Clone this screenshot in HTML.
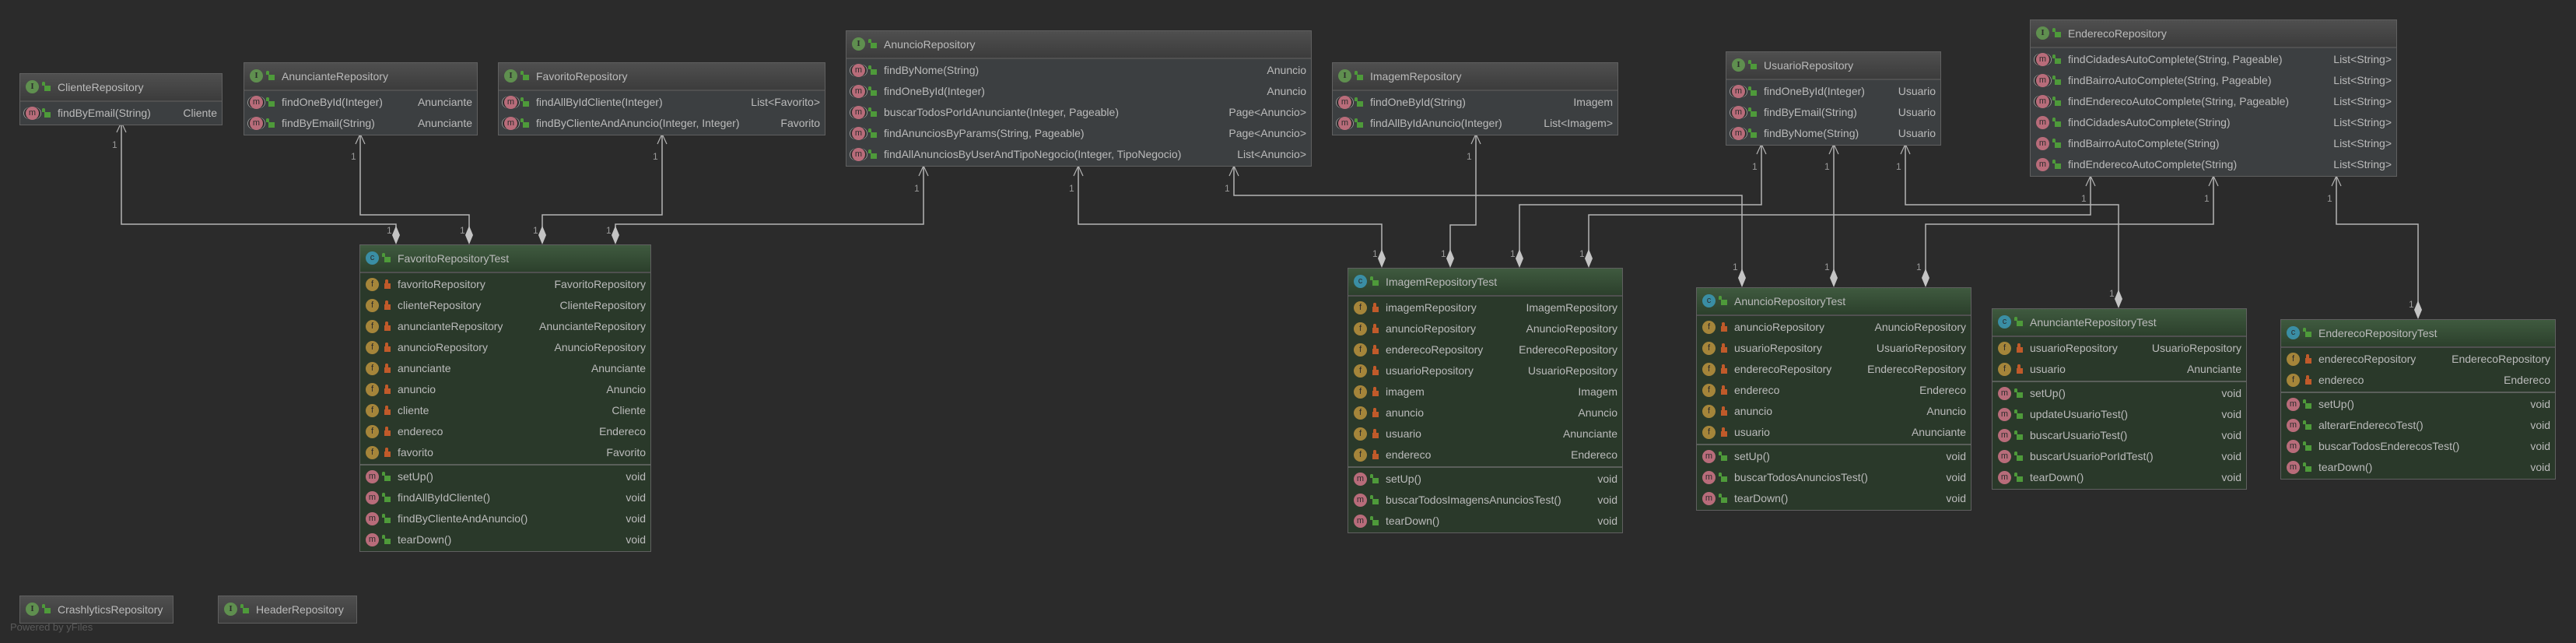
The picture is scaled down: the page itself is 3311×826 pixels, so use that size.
<!DOCTYPE html>
<html><head><meta charset="utf-8"><style>
*{box-sizing:border-box;margin:0;padding:0}
body{width:3311px;height:826px;background:#2b2b2b;position:relative;overflow:hidden;font-family:"Liberation Sans",sans-serif}
svg.l{position:absolute;left:0;top:0}
.b{position:absolute;border:1px solid #606060;font-size:14px;color:#bbbbbb}
.h{position:relative;height:34px;line-height:34px;padding-left:48px;white-space:nowrap}
.i .h{background:linear-gradient(#4f4f4f,#3c3c3c)}
.t .h{background:linear-gradient(#3f5a3f,#2c402c)}
.s{padding:1px 0;border-top:2px solid #505050}
.i .s{background:#3c3f41}
.t .s{background:#2a392a}
.t .s+.s{border-top:2px solid #5a5f5a}
.r{position:relative;height:27px;line-height:27px;padding-left:48px;padding-right:6px;display:flex;justify-content:space-between;white-space:nowrap}
.r span:last-child{padding-left:12px}
.ic{position:absolute;left:7px;top:5px;width:17px;height:17px;border-radius:50%;font-size:11px;line-height:17px;text-align:center;color:#2b2b2b;padding:0!important}
.h .ic{top:8px}
.I{background:#5f8f4f;font-family:"Liberation Serif",serif;font-weight:bold}
.m{background:#b86c7a}
.a{background:#b86c7a;box-shadow:-3px 0 0 -1px #2b2b2b,-4px 0 0 -1px #999,3px 0 0 -1px #2b2b2b,4px 0 0 -1px #999}
.f{background:#a5853a}
.C{background:#3a8ea4}
.lk{position:absolute;left:31px;top:12px;width:8px;height:7px;padding:0!important}
.h .lk{top:15px}
.lk::before{content:"";position:absolute;left:1px;top:-5px;width:4px;height:5px;border:2px solid;border-bottom:none;border-radius:3px 3px 0 0;box-sizing:border-box}
.g{background:#4e9a3a}.g::before{border-color:#4e9a3a;left:-3px}
.o{background:#c05a2a}.o::before{border-color:#c05a2a}
</style></head><body>
<svg class="l" width="3311" height="826" fill="none" stroke="#b4b4b4" stroke-width="1.5">
<path d="M156 156V288H509V292M463 171V276H603V292M851 171V276H697V292M1187 212V288H791V292M1386 212V288H1776V322M1897 171V289H1864V322M2264 184V263H1953V322M2687 225V276H2042V322M1586 212V251H2239V347M2357 184V347M2845 225V288H2475V347M2449 184V263H2723V374M3003 225V288H3108V388"/>
<g stroke-width="1.2"><path d="M150 170L156 157L162 170M457 185L463 172L469 185M845 185L851 172L857 185M1181 226L1187 213L1193 226M1380 226L1386 213L1392 226M1580 226L1586 213L1592 226M1891 185L1897 172L1903 185M2258 198L2264 185L2270 198M2351 198L2357 185L2363 198M2443 198L2449 185L2455 198M2681 239L2687 226L2693 239M2839 239L2845 226L2851 239M2997 239L3003 226L3009 239"/></g>
<g fill="#c4c4c4" stroke="none">
<polygon points="509,314 514,302 509,290 504,302"/><polygon points="603,314 608,302 603,290 598,302"/><polygon points="697,314 702,302 697,290 692,302"/><polygon points="791,314 796,302 791,290 786,302"/>
<polygon points="1776,344 1781,332 1776,320 1771,332"/><polygon points="1864,344 1869,332 1864,320 1859,332"/><polygon points="1953,344 1958,332 1953,320 1948,332"/><polygon points="2042,344 2047,332 2042,320 2037,332"/>
<polygon points="2239,369 2244,357 2239,345 2234,357"/><polygon points="2357,369 2362,357 2357,345 2352,357"/><polygon points="2475,369 2480,357 2475,345 2470,357"/>
<polygon points="2723,396 2728,384 2723,372 2718,384"/><polygon points="3108,410 3113,398 3108,386 3103,398"/>
</g>
<g fill="#9a9a9a" stroke="none" font-size="12" font-family="Liberation Sans">
<text x="144" y="190">1</text><text x="451" y="205">1</text><text x="839" y="205">1</text><text x="1175" y="246">1</text><text x="1374" y="246">1</text><text x="1574" y="246">1</text><text x="1885" y="205">1</text><text x="2252" y="218">1</text><text x="2345" y="218">1</text><text x="2437" y="218">1</text><text x="2675" y="259">1</text><text x="2833" y="259">1</text><text x="2991" y="259">1</text>
<text x="497" y="300">1</text><text x="591" y="300">1</text><text x="685" y="300">1</text><text x="779" y="300">1</text>
<text x="1764" y="330">1</text><text x="1852" y="330">1</text><text x="1941" y="330">1</text><text x="2030" y="330">1</text>
<text x="2227" y="347">1</text><text x="2345" y="347">1</text><text x="2463" y="347">1</text><text x="2711" y="381">1</text><text x="3096" y="395">1</text>
</g>
</svg>

<div class="b i" style="left:25px;top:94px;width:261px"><div class="h"><span class="ic I">I</span><span class="lk g"></span>ClienteRepository</div>
<div class="s"><div class="r"><span class="ic a">m</span><span class="lk g"></span><span>findByEmail(String)</span><span>Cliente</span></div></div></div>

<div class="b i" style="left:313px;top:80px;width:301px"><div class="h"><span class="ic I">I</span><span class="lk g"></span>AnuncianteRepository</div>
<div class="s"><div class="r"><span class="ic a">m</span><span class="lk g"></span><span>findOneById(Integer)</span><span>Anunciante</span></div>
<div class="r"><span class="ic a">m</span><span class="lk g"></span><span>findByEmail(String)</span><span>Anunciante</span></div></div></div>

<div class="b i" style="left:640px;top:80px;width:421px"><div class="h"><span class="ic I">I</span><span class="lk g"></span>FavoritoRepository</div>
<div class="s"><div class="r"><span class="ic a">m</span><span class="lk g"></span><span>findAllByIdCliente(Integer)</span><span>List&lt;Favorito&gt;</span></div>
<div class="r"><span class="ic a">m</span><span class="lk g"></span><span>findByClienteAndAnuncio(Integer, Integer)</span><span>Favorito</span></div></div></div>

<div class="b i" style="left:1087px;top:39px;width:599px"><div class="h"><span class="ic I">I</span><span class="lk g"></span>AnuncioRepository</div>
<div class="s"><div class="r"><span class="ic a">m</span><span class="lk g"></span><span>findByNome(String)</span><span>Anuncio</span></div>
<div class="r"><span class="ic a">m</span><span class="lk g"></span><span>findOneById(Integer)</span><span>Anuncio</span></div>
<div class="r"><span class="ic a">m</span><span class="lk g"></span><span>buscarTodosPorIdAnunciante(Integer, Pageable)</span><span>Page&lt;Anuncio&gt;</span></div>
<div class="r"><span class="ic a">m</span><span class="lk g"></span><span>findAnunciosByParams(String, Pageable)</span><span>Page&lt;Anuncio&gt;</span></div>
<div class="r"><span class="ic a">m</span><span class="lk g"></span><span>findAllAnunciosByUserAndTipoNegocio(Integer, TipoNegocio)</span><span>List&lt;Anuncio&gt;</span></div></div></div>

<div class="b i" style="left:1712px;top:80px;width:368px"><div class="h"><span class="ic I">I</span><span class="lk g"></span>ImagemRepository</div>
<div class="s"><div class="r"><span class="ic a">m</span><span class="lk g"></span><span>findOneById(String)</span><span>Imagem</span></div>
<div class="r"><span class="ic a">m</span><span class="lk g"></span><span>findAllByIdAnuncio(Integer)</span><span>List&lt;Imagem&gt;</span></div></div></div>

<div class="b i" style="left:2218px;top:66px;width:277px"><div class="h"><span class="ic I">I</span><span class="lk g"></span>UsuarioRepository</div>
<div class="s"><div class="r"><span class="ic a">m</span><span class="lk g"></span><span>findOneById(Integer)</span><span>Usuario</span></div>
<div class="r"><span class="ic a">m</span><span class="lk g"></span><span>findByEmail(String)</span><span>Usuario</span></div>
<div class="r"><span class="ic a">m</span><span class="lk g"></span><span>findByNome(String)</span><span>Usuario</span></div></div></div>

<div class="b i" style="left:2609px;top:25px;width:472px"><div class="h"><span class="ic I">I</span><span class="lk g"></span>EnderecoRepository</div>
<div class="s"><div class="r"><span class="ic a">m</span><span class="lk g"></span><span>findCidadesAutoComplete(String, Pageable)</span><span>List&lt;String&gt;</span></div>
<div class="r"><span class="ic a">m</span><span class="lk g"></span><span>findBairroAutoComplete(String, Pageable)</span><span>List&lt;String&gt;</span></div>
<div class="r"><span class="ic a">m</span><span class="lk g"></span><span>findEnderecoAutoComplete(String, Pageable)</span><span>List&lt;String&gt;</span></div>
<div class="r"><span class="ic m">m</span><span class="lk g"></span><span>findCidadesAutoComplete(String)</span><span>List&lt;String&gt;</span></div>
<div class="r"><span class="ic m">m</span><span class="lk g"></span><span>findBairroAutoComplete(String)</span><span>List&lt;String&gt;</span></div>
<div class="r"><span class="ic m">m</span><span class="lk g"></span><span>findEnderecoAutoComplete(String)</span><span>List&lt;String&gt;</span></div></div></div>

<div class="b t" style="left:462px;top:314px;width:375px"><div class="h"><span class="ic C">c</span><span class="lk g"></span>FavoritoRepositoryTest</div>
<div class="s"><div class="r"><span class="ic f">f</span><span class="lk o"></span><span>favoritoRepository</span><span>FavoritoRepository</span></div>
<div class="r"><span class="ic f">f</span><span class="lk o"></span><span>clienteRepository</span><span>ClienteRepository</span></div>
<div class="r"><span class="ic f">f</span><span class="lk o"></span><span>anuncianteRepository</span><span>AnuncianteRepository</span></div>
<div class="r"><span class="ic f">f</span><span class="lk o"></span><span>anuncioRepository</span><span>AnuncioRepository</span></div>
<div class="r"><span class="ic f">f</span><span class="lk o"></span><span>anunciante</span><span>Anunciante</span></div>
<div class="r"><span class="ic f">f</span><span class="lk o"></span><span>anuncio</span><span>Anuncio</span></div>
<div class="r"><span class="ic f">f</span><span class="lk o"></span><span>cliente</span><span>Cliente</span></div>
<div class="r"><span class="ic f">f</span><span class="lk o"></span><span>endereco</span><span>Endereco</span></div>
<div class="r"><span class="ic f">f</span><span class="lk o"></span><span>favorito</span><span>Favorito</span></div></div>
<div class="s"><div class="r"><span class="ic m">m</span><span class="lk g"></span><span>setUp()</span><span>void</span></div>
<div class="r"><span class="ic m">m</span><span class="lk g"></span><span>findAllByIdCliente()</span><span>void</span></div>
<div class="r"><span class="ic m">m</span><span class="lk g"></span><span>findByClienteAndAnuncio()</span><span>void</span></div>
<div class="r"><span class="ic m">m</span><span class="lk g"></span><span>tearDown()</span><span>void</span></div></div></div>

<div class="b t" style="left:1732px;top:344px;width:354px"><div class="h"><span class="ic C">c</span><span class="lk g"></span>ImagemRepositoryTest</div>
<div class="s"><div class="r"><span class="ic f">f</span><span class="lk o"></span><span>imagemRepository</span><span>ImagemRepository</span></div>
<div class="r"><span class="ic f">f</span><span class="lk o"></span><span>anuncioRepository</span><span>AnuncioRepository</span></div>
<div class="r"><span class="ic f">f</span><span class="lk o"></span><span>enderecoRepository</span><span>EnderecoRepository</span></div>
<div class="r"><span class="ic f">f</span><span class="lk o"></span><span>usuarioRepository</span><span>UsuarioRepository</span></div>
<div class="r"><span class="ic f">f</span><span class="lk o"></span><span>imagem</span><span>Imagem</span></div>
<div class="r"><span class="ic f">f</span><span class="lk o"></span><span>anuncio</span><span>Anuncio</span></div>
<div class="r"><span class="ic f">f</span><span class="lk o"></span><span>usuario</span><span>Anunciante</span></div>
<div class="r"><span class="ic f">f</span><span class="lk o"></span><span>endereco</span><span>Endereco</span></div></div>
<div class="s"><div class="r"><span class="ic m">m</span><span class="lk g"></span><span>setUp()</span><span>void</span></div>
<div class="r"><span class="ic m">m</span><span class="lk g"></span><span>buscarTodosImagensAnunciosTest()</span><span>void</span></div>
<div class="r"><span class="ic m">m</span><span class="lk g"></span><span>tearDown()</span><span>void</span></div></div></div>

<div class="b t" style="left:2180px;top:369px;width:354px"><div class="h"><span class="ic C">c</span><span class="lk g"></span>AnuncioRepositoryTest</div>
<div class="s"><div class="r"><span class="ic f">f</span><span class="lk o"></span><span>anuncioRepository</span><span>AnuncioRepository</span></div>
<div class="r"><span class="ic f">f</span><span class="lk o"></span><span>usuarioRepository</span><span>UsuarioRepository</span></div>
<div class="r"><span class="ic f">f</span><span class="lk o"></span><span>enderecoRepository</span><span>EnderecoRepository</span></div>
<div class="r"><span class="ic f">f</span><span class="lk o"></span><span>endereco</span><span>Endereco</span></div>
<div class="r"><span class="ic f">f</span><span class="lk o"></span><span>anuncio</span><span>Anuncio</span></div>
<div class="r"><span class="ic f">f</span><span class="lk o"></span><span>usuario</span><span>Anunciante</span></div></div>
<div class="s"><div class="r"><span class="ic m">m</span><span class="lk g"></span><span>setUp()</span><span>void</span></div>
<div class="r"><span class="ic m">m</span><span class="lk g"></span><span>buscarTodosAnunciosTest()</span><span>void</span></div>
<div class="r"><span class="ic m">m</span><span class="lk g"></span><span>tearDown()</span><span>void</span></div></div></div>

<div class="b t" style="left:2560px;top:396px;width:328px"><div class="h"><span class="ic C">c</span><span class="lk g"></span>AnuncianteRepositoryTest</div>
<div class="s"><div class="r"><span class="ic f">f</span><span class="lk o"></span><span>usuarioRepository</span><span>UsuarioRepository</span></div>
<div class="r"><span class="ic f">f</span><span class="lk o"></span><span>usuario</span><span>Anunciante</span></div></div>
<div class="s"><div class="r"><span class="ic m">m</span><span class="lk g"></span><span>setUp()</span><span>void</span></div>
<div class="r"><span class="ic m">m</span><span class="lk g"></span><span>updateUsuarioTest()</span><span>void</span></div>
<div class="r"><span class="ic m">m</span><span class="lk g"></span><span>buscarUsuarioTest()</span><span>void</span></div>
<div class="r"><span class="ic m">m</span><span class="lk g"></span><span>buscarUsuarioPorIdTest()</span><span>void</span></div>
<div class="r"><span class="ic m">m</span><span class="lk g"></span><span>tearDown()</span><span>void</span></div></div></div>

<div class="b t" style="left:2931px;top:410px;width:354px"><div class="h"><span class="ic C">c</span><span class="lk g"></span>EnderecoRepositoryTest</div>
<div class="s"><div class="r"><span class="ic f">f</span><span class="lk o"></span><span>enderecoRepository</span><span>EnderecoRepository</span></div>
<div class="r"><span class="ic f">f</span><span class="lk o"></span><span>endereco</span><span>Endereco</span></div></div>
<div class="s"><div class="r"><span class="ic m">m</span><span class="lk g"></span><span>setUp()</span><span>void</span></div>
<div class="r"><span class="ic m">m</span><span class="lk g"></span><span>alterarEnderecoTest()</span><span>void</span></div>
<div class="r"><span class="ic m">m</span><span class="lk g"></span><span>buscarTodosEnderecosTest()</span><span>void</span></div>
<div class="r"><span class="ic m">m</span><span class="lk g"></span><span>tearDown()</span><span>void</span></div></div></div>

<div class="b i" style="left:25px;top:765px;width:198px"><div class="h"><span class="ic I">I</span><span class="lk g"></span>CrashlyticsRepository</div></div>
<div class="b i" style="left:280px;top:765px;width:179px"><div class="h"><span class="ic I">I</span><span class="lk g"></span>HeaderRepository</div></div>
<div style="position:absolute;left:13px;top:798px;font-size:13px;color:#5a5a5a">Powered by yFiles</div>
</body></html>
